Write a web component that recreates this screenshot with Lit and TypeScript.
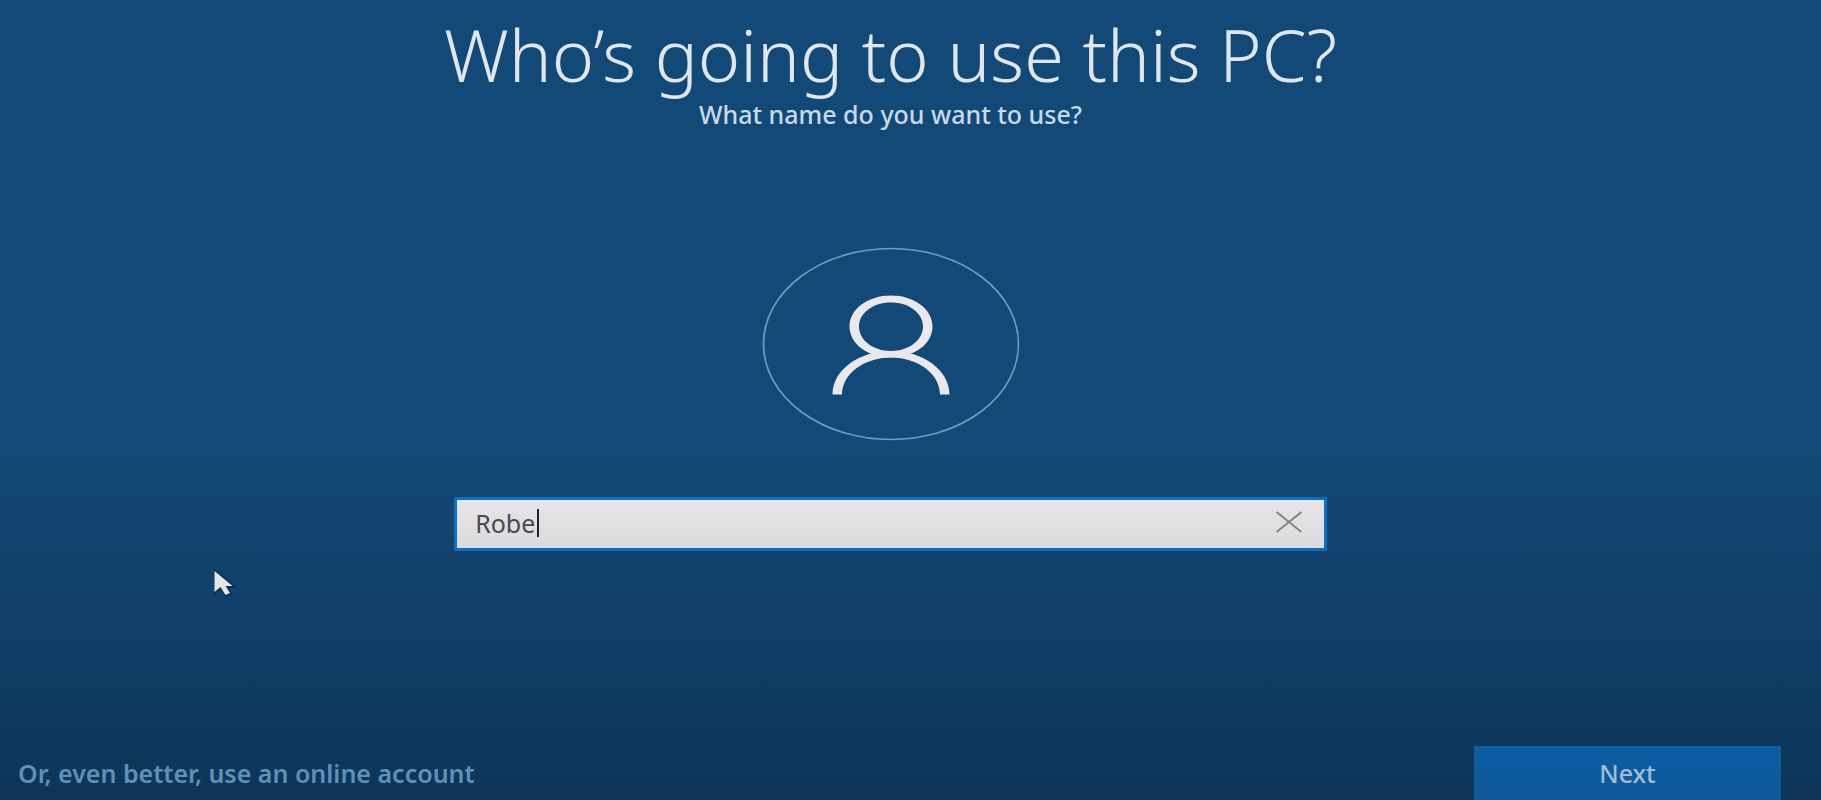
import { LitElement, html, css } from "lit";
import { customElement, state } from "lit/decorators.js";

@customElement("app-root")
export class AppRoot extends LitElement {
  @state() private name = "Robe";

  static styles = css`
    :host {
      display: block;
      font-family: "Noto Sans", "Open Sans", sans-serif;
    }
    .page {
      position: relative;
      box-sizing: border-box;
      display: flex;
      flex-direction: column;
      min-height: 100vh;
      padding: 12px 40px 0 18px;
      overflow: hidden;
      background: linear-gradient(#134976 0%, #134976 56%, #11426c 72%, #0e3458 100%);
    }
    .content {
      flex: 1;
      display: flex;
      flex-direction: column;
      align-items: center;
      margin-left: -18px;
    }
    .title {
      margin: 0;
      font-size: 72px;
      line-height: 84px;
      font-weight: 300;
      color: #dfe6ee;
      text-align: center;
    }
    .subtitle {
      margin: 0;
      font-size: 25px;
      line-height: 36px;
      font-weight: 500;
      color: #c8dbeb;
    }
    .avatar {
      display: block;
      width: 258px;
      height: 194px;
      margin: 115px 0 56px;
    }
    .field {
      position: relative;
      box-sizing: border-box;
      display: flex;
      width: 49%;
      height: 54px;
      border: 3px solid #0b70c2;
      background: linear-gradient(#e7e5e7, #dcdadc);
    }
    .name {
      flex: 1;
      min-width: 0;
      border: 0;
      outline: 0;
      padding: 0 0 2px 18px;
      background: transparent;
      font: 400 25px/32px "Noto Sans", "Open Sans", sans-serif;
      color: #444a52;
      caret-color: transparent;
    }
    .caret {
      position: absolute;
      left: 80px;
      top: 9px;
      width: 2px;
      height: 28px;
      background: #222;
    }
    .clear {
      display: flex;
      align-items: center;
      justify-content: center;
      width: 70px;
      border: 0;
      padding: 0 0 4px;
      background: transparent;
    }
    .footer {
      display: flex;
      align-items: center;
      justify-content: space-between;
    }
    .online {
      font-size: 25px;
      line-height: 32px;
      font-weight: 600;
      color: #5f90b8;
      text-decoration: none;
    }
    .next {
      width: 307px;
      height: 54px;
      border: 0;
      padding: 0;
      background: linear-gradient(#0d5ea3, #0d5898);
      font: 500 25px/32px "Noto Sans", "Open Sans", sans-serif;
      color: #a3bcd5;
    }
    .pointer {
      position: absolute;
      left: 211px;
      top: 568px;
      pointer-events: none;
    }
  `;

  render() {
    return html`
      <div class="page">
        <main class="content">
          <h1 class="title">Who’s going to use this PC?</h1>
          <p class="subtitle" id="prompt">What name do you want to use?</p>
          <svg class="avatar" viewBox="0 0 258 194" fill="none" aria-hidden="true">
            <ellipse cx="129" cy="97" rx="127.5" ry="95.5" stroke="#6b9cc4" stroke-width="1.7" />
            <g fill="#e9e9ed" fill-rule="evenodd">
              <path d="M129 48.500C152 48.500 170.500 62 170.500 79.500C170.500 97 152 110.500 129 110.500C106 110.500 87.500 97 87.500 79.500C87.500 62 106 48.500 129 48.500ZM129 55.500C111 55.500 97 66 97 79.500C97 93 111 104 129 104C147 104 161 93 161 79.500C161 66 147 55.500 129 55.500Z" />
              <path d="M70.500 147.500C70.500 123 97 104 129 104C161 104 187.500 123 187.500 147.500H178C178 127 156 110.500 129 110.500C102 110.500 80 127 80 147.500Z" />
            </g>
          </svg>
          <div class="field">
            <input
              class="name"
              type="text"
              aria-labelledby="prompt"
              spellcheck="false"
              .value=${this.name}
              @input=${(e: Event) => (this.name = (e.target as HTMLInputElement).value)}
            />
            <span class="caret"></span>
            <button class="clear" type="button" aria-label="Clear" @click=${() => (this.name = "")}>
              <svg width="28" height="22" viewBox="0 0 28 22" fill="none" stroke="#858387" stroke-width="2">
                <path d="M1.500 1L26.500 21M26.500 1L1.500 21" />
              </svg>
            </button>
          </div>
        </main>
        <footer class="footer">
          <a class="online" href="#online">Or, even better, use an online account</a>
          <button class="next" type="button">Next</button>
        </footer>
        <svg class="pointer" width="28" height="32" viewBox="0 0 28 32" aria-hidden="true">
          <path d="M4 3V25L10 20L15 28L20 26L15.500 19H23Z" fill="#0a2947" opacity=".7" stroke="#0a2947" stroke-width="2" />
          <path d="M3.500 3V24L9.500 19L14.500 27L19 25L14.500 18H21.500Z" fill="#e6e7ea" />
        </svg>
      </div>
    `;
  }
}
